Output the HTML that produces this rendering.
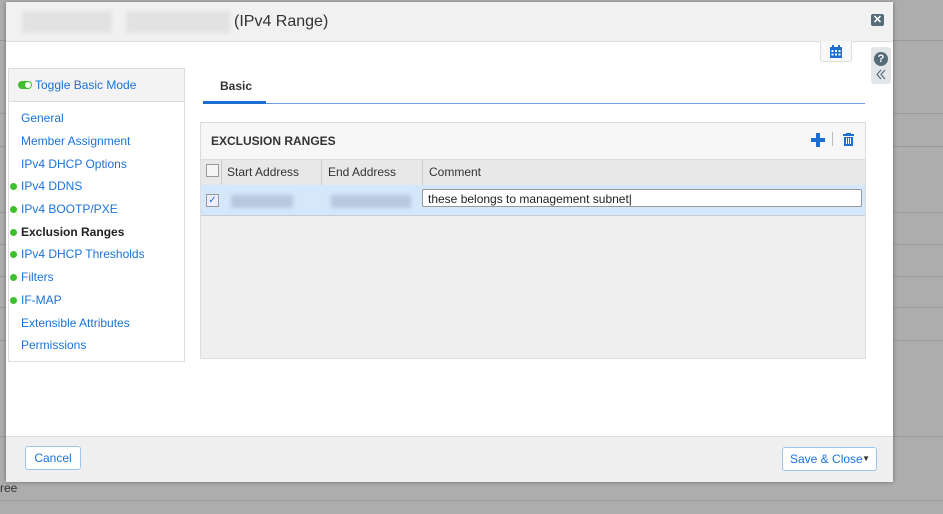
<!DOCTYPE html>
<html><head><style>
body{margin:0;width:943px;height:514px;overflow:hidden;background:#adadad;font-family:"Liberation Sans",sans-serif;position:relative}
.bgl{position:absolute;left:0;width:943px;height:1px;background:#999}
.m{position:absolute;left:6px;top:2px;width:887px;height:479px;background:#fff;box-shadow:0 1px 4px rgba(0,0,0,.4)}
.hd{position:absolute;left:0;top:0;width:887px;height:39px;background:#f1f1f1;border-bottom:1px solid #ddd}
.blur{position:absolute;background:#e2e2e2;filter:blur(2px)}
.a{position:absolute}
.nav{position:absolute;left:2px;top:66px;width:175px;height:292px;border:1px solid #ddd;background:#fff}
.nav div.i{position:absolute;left:12px;font-size:12px;color:#1a73d9}
.dot{position:absolute;left:-11px;top:4px;width:7px;height:7px;border-radius:50%;background:#3fbf2f}
.ft{position:absolute;left:0;top:434px;width:887px;height:45px;background:#efefef;border-top:1px solid #ddd}
.btn{position:absolute;background:#fff;border:1px solid #9fc4f0;border-radius:3px;color:#1a73d9;font-size:12px}
</style></head><body>
<div class="bgl" style="top:40px"></div><div class="bgl" style="top:113px"></div><div class="bgl" style="top:146px"></div><div class="bgl" style="top:212px"></div><div class="bgl" style="top:244px"></div><div class="bgl" style="top:276px"></div><div class="bgl" style="top:307px"></div><div class="bgl" style="top:340px"></div><div class="bgl" style="top:436px"></div><div class="bgl" style="top:500px"></div>
<div class="a" style="left:0;top:481px;font-size:12px;color:#333">ree</div>
<div class="m">
 <div class="hd">
  <div class="blur" style="left:16px;top:9px;width:90px;height:22px"></div>
  <div class="blur" style="left:120px;top:9px;width:104px;height:22px"></div>
  <div class="a" style="left:228px;top:11px;font-size:16px;color:#333">(IPv4 Range)</div>
  <div class="a" style="left:865px;top:12px;width:13px;height:12px;background:#566b78;border-radius:2px;color:#fff;font-size:11px;font-weight:bold;text-align:center;line-height:12px">✕</div>
 </div>
 <div class="a" style="left:814px;top:39px;width:30px;height:20px;border:1px solid #ddd;border-top:none;border-radius:0 0 3px 3px;background:#f8f8f8">
  <svg width="14" height="13" style="position:absolute;left:8px;top:4px" viewBox="0 0 14 13"><rect x="1" y="2" width="12" height="11" fill="#1a6fd0"/><rect x="3" y="0" width="2" height="3" fill="#1a6fd0"/><rect x="9" y="0" width="2" height="3" fill="#1a6fd0"/><g fill="#fff"><rect x="2.5" y="5" width="2" height="2"/><rect x="6" y="5" width="2" height="2"/><rect x="9.5" y="5" width="2" height="2"/><rect x="2.5" y="8.5" width="2" height="2"/><rect x="6" y="8.5" width="2" height="2"/><rect x="9.5" y="8.5" width="2" height="2"/></g></svg>
 </div>
 <div class="a" style="left:865px;top:45px;width:20px;height:37px;background:#e3e6e8;border-radius:3px">
  <div class="a" style="left:3px;top:5px;width:14px;height:14px;border-radius:50%;background:#566b78;color:#fff;font-size:11px;font-weight:bold;text-align:center;line-height:14px">?</div>
  <svg class="a" style="left:5px;top:22px" width="10" height="11" viewBox="0 0 10 11"><path d="M5 1L1 5.5 5 10M9 1L5 5.5 9 10" fill="none" stroke="#566b78" stroke-width="1.2"/></svg>
 </div>
 <div class="nav">
  <div class="a" style="left:0;top:0;width:175px;height:32px;background:#f3f3f3;border-bottom:1px solid #ddd">
   <div class="a" style="left:9px;top:12px;width:14px;height:8px;border-radius:4px;background:#3fbf2f"><div class="a" style="left:7px;top:1px;width:6px;height:6px;border-radius:50%;background:#fff"></div></div>
   <div class="a" style="left:26px;top:9px;font-size:12px;color:#1a73d9">Toggle Basic Mode</div>
  </div>
  <div class="i" style="top:42px">General</div>
  <div class="i" style="top:65px">Member Assignment</div>
  <div class="i" style="top:88px">IPv4 DHCP Options</div>
  <div class="i" style="top:110px"><span class="dot"></span>IPv4 DDNS</div>
  <div class="i" style="top:133px"><span class="dot"></span>IPv4 BOOTP/PXE</div>
  <div class="i" style="top:156px;color:#222;font-weight:bold"><span class="dot"></span>Exclusion Ranges</div>
  <div class="i" style="top:178px"><span class="dot"></span>IPv4 DHCP Thresholds</div>
  <div class="i" style="top:201px"><span class="dot"></span>Filters</div>
  <div class="i" style="top:224px"><span class="dot"></span>IF-MAP</div>
  <div class="i" style="top:247px">Extensible Attributes</div>
  <div class="i" style="top:269px">Permissions</div>
 </div>
 <div class="a" style="left:197px;top:101px;width:662px;height:1px;background:#6aa0e6"></div>
 <div class="a" style="left:197px;top:99px;width:63px;height:3px;background:#1a6fd0"></div>
 <div class="a" style="left:214px;top:77px;font-size:12px;font-weight:bold;color:#333">Basic</div>
 <div class="a" style="left:194px;top:120px;width:664px;height:235px;background:#efefef;border:1px solid #ddd">
  <div class="a" style="left:0;top:0;width:664px;height:36px;background:#f7f7f7"></div>
  <div class="a" style="left:10px;top:11px;font-size:12px;font-weight:bold;color:#333">EXCLUSION RANGES</div>
  <svg class="a" style="left:610px;top:10px" width="14" height="14" viewBox="0 0 14 14"><path d="M5 0h4v5h5v4H9v5H5V9H0V5h5z" fill="#1a6fd0"/></svg>
  <div class="a" style="left:631px;top:9px;width:1px;height:14px;background:#bbb"></div>
  <svg class="a" style="left:642px;top:10px" width="11" height="13" viewBox="0 0 11 13"><rect x="0" y="1" width="11" height="2" fill="#1a6fd0"/><rect x="3" y="0" width="5" height="1" fill="#1a6fd0"/><path d="M1 4h9v9H1z" fill="#1a6fd0"/><g fill="#fff"><rect x="3" y="5" width="1" height="6"/><rect x="5" y="5" width="1" height="6"/><rect x="7" y="5" width="1" height="6"/></g></svg>
  <div class="a" style="left:0;top:36px;width:664px;height:25px;background:#e8e8e8;border-top:1px solid #ddd;border-bottom:1px solid #ddd"></div>
  <div class="a" style="left:5px;top:41px;width:11px;height:11px;border:1px solid #999;background:#f5f5f5"></div>
  <div class="a" style="left:20px;top:37px;width:1px;height:25px;background:#ccc"></div>
  <div class="a" style="left:120px;top:37px;width:1px;height:25px;background:#ccc"></div>
  <div class="a" style="left:221px;top:37px;width:1px;height:25px;background:#ccc"></div>
  <div class="a" style="left:26px;top:42px;font-size:12px;color:#333">Start Address</div>
  <div class="a" style="left:127px;top:42px;font-size:12px;color:#333">End Address</div>
  <div class="a" style="left:228px;top:42px;font-size:12px;color:#333">Comment</div>
  <div class="a" style="left:0;top:62px;width:664px;height:30px;background:#d5e8fb;border-bottom:1px solid #ccc"></div>
  <div class="a" style="left:5px;top:71px;width:11px;height:11px;border:1px solid #999;background:#eef;color:#1a6fd0;font-size:10px;line-height:11px;text-align:center">✓</div>
  <div class="blur" style="left:30px;top:72px;width:62px;height:13px;background:#b5c8de"></div>
  <div class="blur" style="left:130px;top:72px;width:80px;height:13px;background:#b5c8de"></div>
  <div class="a" style="left:221px;top:66px;width:440px;height:18px;background:#fff;border:1px solid #999;border-radius:2px;font-size:12px;color:#222;line-height:18px;padding-left:5px;box-sizing:border-box">these belongs to management subnet|</div>
 </div>
 <div class="ft">
  <div class="btn" style="left:19px;top:9px;width:54px;height:22px;line-height:22px;text-align:center">Cancel</div>
  <div class="btn" style="left:776px;top:10px;width:93px;height:22px;line-height:22px"><span style="margin-left:7px">Save &amp; Close</span><span style="position:absolute;right:6px;top:0;font-size:8px;color:#333">▼</span></div>
 </div>
</div>
</body></html>
